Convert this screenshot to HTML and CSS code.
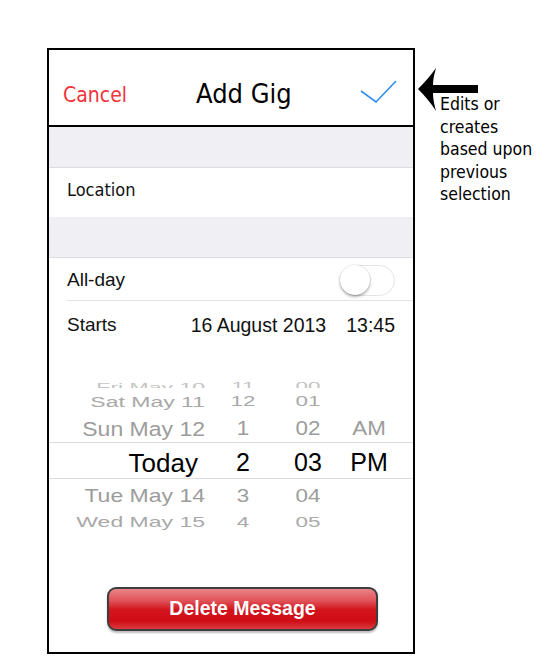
FILE: index.html
```html
<!DOCTYPE html>
<html>
<head>
<meta charset="utf-8">
<link rel="stylesheet" href="styles.css">
</head>
<body>
<div class="phone">
  <header class="nav">
    <span class="cancel">Cancel</span>
    <span class="title">Add Gig</span>
    <svg class="check" width="38" height="26" viewBox="0 0 38 26"><path d="M1 12 L16 23 L36 2" fill="none" stroke="#2f8ef2" stroke-width="1.6"/></svg>
  </header>
  <div class="gap"></div>
  <div class="row loc">Location</div>
  <div class="gap"></div>
  <div class="row allday">
    <span class="label">All-day</span>
    <span class="toggle"><span class="knob"></span></span>
  </div>
  <div class="row starts">
    <span class="label">Starts</span>
    <span class="date">16 August 2013</span>
    <span class="time">13:45</span>
  </div>
  <div class="picker">
    <div class="prow r-fri"><span class="d">Fri May 10</span><span>11</span><span>00</span><span></span></div>
    <div class="prow r-sat"><span class="d">Sat May 11</span><span>12</span><span>01</span><span></span></div>
    <div class="prow r-sun"><span class="d">Sun May 12</span><span>1</span><span>02</span><span>AM</span></div>
    <div class="prow r-sel"><span class="d">Today</span><span>2</span><span>03</span><span>PM</span></div>
    <div class="prow r-tue"><span class="d">Tue May 14</span><span>3</span><span>04</span><span></span></div>
    <div class="prow r-wed"><span class="d">Wed May 15</span><span>4</span><span>05</span><span></span></div>
    <div class="prow r-thu"><span class="d">Thu May 16</span><span>5</span><span>06</span><span></span></div>
  </div>
  <button class="delete">Delete Message</button>
</div>
<div class="note">
  <svg class="arrow" width="64" height="48" viewBox="0 0 64 48"><path d="M0 23 C7 16 13 9 18 2 C16 9 15 14 15 19 L60 19 L60 27 L15 27 C15 32 16 38 18 45 C13 37 7 30 0 23 Z" fill="#000"/></svg>
  <p class="note-text">Edits or<br>creates<br>based upon<br>previous<br>selection</p>
</div>
</body>
</html>
```

FILE: styles.css
```css
html, body { margin: 0; padding: 0; background: #fff; }
body { position: relative; width: 540px; height: 661px; overflow: hidden; }

.phone {
  margin: 48px 0 0 47px;
  width: 364px;
  height: 602px;
  border: 2px solid #000;
  display: flex;
  flex-direction: column;
  overflow: hidden;
  background: #fff;
}

.nav {
  border-bottom: 2px solid #000;
  display: flex;
  align-items: center;
  padding-top: 11px;
  box-sizing: border-box;
  height: 77px;
  flex: none;
  font-family: "DejaVu Sans Condensed", "DejaVu Sans", sans-serif;
  font-stretch: condensed;
}
.cancel { color: #f2333a; font-size: 21px; margin-left: 14px; margin-top: 4px; width: 133px; }
.title { color: #000; font-size: 27px; }
.check { margin-left: auto; margin-right: 15px; margin-top: -2px; }

.gap { height: 40px; background: #efeff4; flex: none; }

.row { display: flex; align-items: center; padding-left: 18px; flex: none; box-sizing: border-box; }
.loc {
  height: 50px;
  border-top: 1px solid #dcdce0;
  padding-bottom: 6px;
  font-family: "DejaVu Sans Condensed", "DejaVu Sans", sans-serif;
  font-stretch: condensed;
  font-size: 18px;
  color: #111;
}
.allday, .starts { font-family: "Liberation Sans", Arial, sans-serif; font-size: 19px; color: #111; }
.allday { height: 44px; border-top: 1px solid #dcdce0; padding-top: 1px; position: relative; }
.allday::after {
  content: ""; position: absolute; left: 18px; right: 0; bottom: 0; height: 1px; background: #e2e2e2;
}
.toggle {
  margin-left: auto; margin-right: 18px;
  width: 55px; height: 31px; box-sizing: border-box;
  border: 1.5px solid #e4e4e4; border-radius: 16px; background: #fff;
  position: relative;
}
.knob {
  position: absolute; left: -1px; top: -1px; width: 30px; height: 30px; border-radius: 50%;
  background: #fff; box-shadow: 0 2px 3px rgba(0,0,0,0.3), 0 0 0 1px rgba(0,0,0,0.06);
}
.starts { height: 47px; padding-top: 1px; }
.starts .date { margin-left: auto; font-size: 19.5px; }
.starts .time { margin-left: 20px; margin-right: 18px; font-size: 19.5px; }

.picker { padding-top: 31px; flex: none; font-family: "Liberation Sans", Arial, sans-serif; }
.prow {
  display: grid;
  grid-template-columns: 160px 68px 62px 60px;
  align-items: center;
  text-align: center;
  overflow: hidden;
  box-sizing: border-box;
  font-size: 22.4px;
  white-space: nowrap;
}
.prow span { display: block; line-height: 1; }
.prow .d { text-align: right; padding-right: 4px; font-size: 23px; }
.r-fri { height: 9px; color: #c4c4c4; }
.r-fri span { transform: translateY(-3px) scaleY(0.45); }
.r-sat { height: 26px; color: #a9a9a9; }
.r-sat span { transform: translateY(1px) scaleY(0.62); }
.r-sun { height: 28px; color: #9c9c9c; }
.r-sun span { transform: translateY(1px) scaleY(0.87); }
.r-sel { height: 37px; color: #000; font-size: 25px; border-top: 1px solid #dcdcdc; border-bottom: 1px solid #dcdcdc; }
.r-sel .d { padding-right: 11px; font-size: 26px; }
.r-sel span { transform: translateY(2px); }
.r-tue { height: 32px; color: #9c9c9c; }
.r-tue span { transform: translateY(1px) scaleY(0.8); }
.r-wed { height: 20px; color: #a9a9a9; }
.r-wed span { transform: scaleY(0.66); }
.r-thu { height: 8px; color: #c4c4c4; }
.r-thu span { transform: translateY(3px) scaleY(0.4); }

.delete {
  flex: none;
  margin: 48px 0 0 58px;
  width: 271px; height: 44px;
  border: 2px solid #3d3d3d; border-radius: 9px;
  background: linear-gradient(#ea8588 0%, #e05157 30%, #d3141d 52%, #cf0d16 80%, #d93b40 100%);
  color: #fff; font-family: "Liberation Sans", Arial, sans-serif; font-weight: bold; font-size: 19.5px;
  padding: 0 0 2px; box-shadow: 0 2px 2px rgba(0,0,0,0.25);
}

.note { position: absolute; left: 418px; top: 66px; }
.arrow { display: block; }
.note-text {
  position: absolute; left: 22px; top: 27px; margin: 0;
  font-family: "DejaVu Sans Condensed", "DejaVu Sans", sans-serif; font-stretch: condensed;
  font-size: 17.5px; line-height: 22.5px; color: #000; white-space: nowrap;
}
```
